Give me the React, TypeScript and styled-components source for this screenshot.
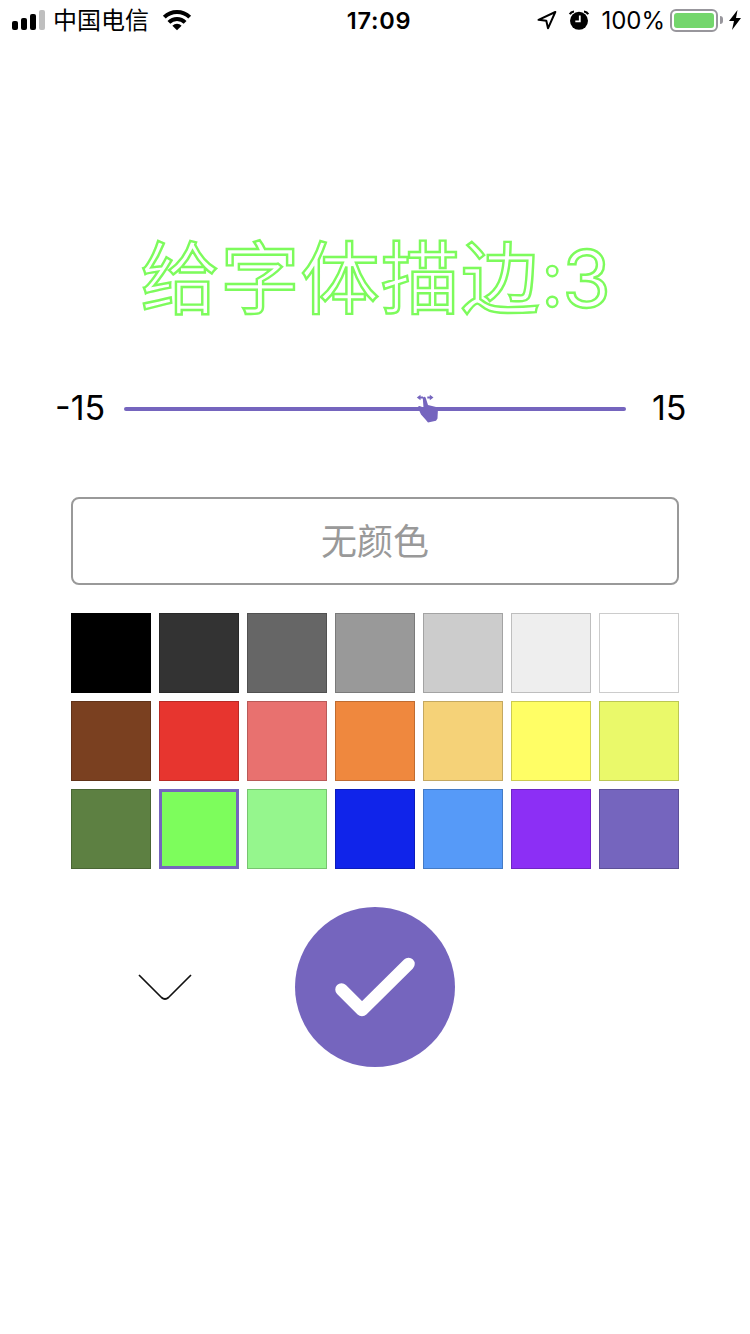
import React from 'react';
import styled, { createGlobalStyle } from 'styled-components';

const PURPLE = '#7565be';

const GlobalStyle = createGlobalStyle`
  *, *::before, *::after { box-sizing: border-box; }
  body {
    margin: 0;
    background: #fff;
    font-family: Inter, "Noto Sans CJK SC", sans-serif;
  }
`;

const Screen = styled.main`
  width: 750px;
  height: 1334px;
  overflow: hidden;
  display: flex;
  flex-direction: column;
  align-items: center;
  color: #000;
  background: #fff;
`;

const StatusBar = styled.header`
  width: 100%;
  height: 40px;
  padding: 0 9px 0 12px;
  display: grid;
  grid-template-columns: 1fr auto 1fr;
  align-items: center;
`;

const StatusGroup = styled.div<{ $end?: boolean }>`
  display: flex;
  align-items: center;
  justify-content: ${({ $end }) => ($end ? 'flex-end' : 'flex-start')};
`;

const Signal = styled.div`
  display: flex;
  align-items: flex-end;
  gap: 3px;
  height: 20px;
`;

const SignalBar = styled.i<{ $height: number; $weak?: boolean }>`
  width: 6px;
  height: ${({ $height }) => $height}px;
  border-radius: 2px;
  background: ${({ $weak }) => ($weak ? '#bfbfbf' : '#000')};
`;

const Carrier = styled.span`
  margin: 0 13px 0 8px;
  padding-top: 2px;
  font-size: 24px;
  line-height: 38px;
`;

const Clock = styled.time`
  padding: 2px 0 0 5px;
  font-size: 23.5px;
  font-weight: 600;
  letter-spacing: 0.8px;
  line-height: 38px;
`;

const Percent = styled.span`
  margin: 0 5px 0 11px;
  padding-top: 2px;
  font-size: 24px;
  line-height: 38px;
`;

const BatteryShell = styled.div`
  width: 48px;
  height: 23px;
  padding: 2px;
  border: 2px solid #98969c;
  border-radius: 6px;
`;

const BatteryFill = styled.div`
  height: 100%;
  border-radius: 3px;
  background: #74d66c;
`;

const BatteryTip = styled.div`
  width: 3px;
  height: 8px;
  margin: 0 6px 0 2px;
  border-radius: 0 3px 3px 0;
  background: #98969c;
`;

const Title = styled.h1`
  margin: 179px 0 0;
  height: 120px;
  font-size: 79px;
  font-weight: 400;
  font-feature-settings: "calt" 0;
  letter-spacing: 1.1px;
  line-height: 120px;
  white-space: nowrap;
  color: transparent;
  -webkit-text-stroke: 2.4px #7dfb5c;
`;

const TitleValue = styled.span`
  font-size: 78px;
  letter-spacing: -1px;
  line-height: 1;
  vertical-align: 1px;
`;

const SliderRow = styled.div`
  width: 100%;
  height: 60px;
  margin-top: 39px;
  padding: 0 55px;
  display: grid;
  grid-template-columns: 69px 502px 1fr;
  align-items: center;
`;

const Limit = styled.span<{ $max?: boolean }>`
  padding-left: ${({ $max }) => ($max ? 26 : 0)}px;
  font-size: 34px;
  line-height: 60px;
`;

const Track = styled.div`
  position: relative;
  width: 502px;
  height: 4px;
  margin: 2px 0 0;
  border-radius: 2px;
  background: ${PURPLE};
`;

const Thumb = styled.svg`
  position: absolute;
  left: 292px;
  top: -13px;
`;

const NoColor = styled.button`
  width: 608px;
  height: 88px;
  margin-top: 59px;
  padding: 0 0 4px;
  border: 2px solid #999;
  border-radius: 8px;
  background: #fff;
  color: #999;
  font: 400 36px/80px "Noto Sans CJK SC", sans-serif;
`;

const Palette = styled.div`
  margin-top: 28px;
  display: grid;
  grid-template-columns: repeat(7, 80px);
  gap: 8px;
`;

const Swatch = styled.button<{ $color: string; $selected?: boolean }>`
  height: 80px;
  padding: 0;
  border: ${({ $selected }) => ($selected ? `3px solid ${PURPLE}` : '1px solid rgba(0, 0, 0, 0.2)')};
  background: ${({ $color }) => $color};
`;

const Actions = styled.div`
  width: 608px;
  margin-top: 38px;
  display: grid;
  grid-template-columns: 1fr 160px 1fr;
  align-items: center;
`;

const CollapseButton = styled.button`
  justify-self: center;
  display: flex;
  margin-right: 36px;
  padding: 0;
  border: 0;
  background: none;
`;

const ConfirmButton = styled.button`
  width: 160px;
  height: 160px;
  padding: 0;
  border: 0;
  border-radius: 50%;
  background: ${PURPLE};
`;

const AlarmSvg = styled.svg`
  margin-left: 11px;
`;

const colors = [
  '#000000', '#333333', '#666666', '#999999', '#cccccc', '#eeeeee', '#ffffff',
  '#7a4020', '#e7352f', '#e8716f', '#ef883e', '#f5d278', '#fffe65', '#eaf96a',
  '#5d8042', '#7dfd5c', '#95f68d', '#1024ea', '#569af8', '#8c2ff5', '#7565be',
];
const selected = 15;

const WifiIcon = () => (
  <svg width="30" height="22" viewBox="0 0 30 22" fill="none" stroke="#000" strokeWidth="4">
    <path d="M2.300 8.200a18 18 0 0 1 25.400 0" />
    <path d="M6.900 13.300a11.500 11.500 0 0 1 16.200 0" />
    <path d="M15 21.300l-4.600-4.600a6.500 6.500 0 0 1 9.200 0z" fill="#000" stroke="none" />
  </svg>
);

const LocationIcon = () => (
  <svg width="20" height="20" viewBox="0 0 20 20" fill="none" stroke="#000" strokeWidth="2" strokeLinejoin="round">
    <path d="M18.300 2L1.500 9.800l7.800.9 1.700 7.600z" />
  </svg>
);

const AlarmIcon = () => (
  <AlarmSvg width="22" height="20" viewBox="0 0 22 20" fill="none">
    <circle cx="11" cy="10.800" r="9" fill="#000" />
    <path d="M1.800 4.200Q3 1.800 6 1.500M16 1.500Q19 1.800 20.200 4.200" stroke="#000" strokeWidth="2.200" />
    <path d="M11.800 5.500v5.800H7.300" stroke="#fff" strokeWidth="1.800" />
  </AlarmSvg>
);

const BoltIcon = () => (
  <svg width="12" height="20" viewBox="0 0 12 20">
    <path d="M8.500 0L0 11h5L3 20 12 8H7z" fill="#000" />
  </svg>
);

const HandThumb = () => (
  <Thumb width="24" height="30" viewBox="0 0 24 30" fill={PURPLE}>
    <path d="M.8 3.500L4.500.8v1.700H7v2H4.500v1.700zM17.500 3.500L13.800.8v1.700H11.300v2h2.500v1.700z" />
    <path d="M7.500 3q1.600-.8 2.200.8l2.300 7.200L20 13q2 .7 1.900 3l-.4 8.500-1.500 2.300-8 1.700-2.500-3-4.500-5L2.300 14.500Q1.300 12 3.500 12L7.500 13.500 6.800 4.500Q6.700 3.500 7.500 3z" />
  </Thumb>
);

export default function App() {
  return (
    <>
      <GlobalStyle />
      <Screen>
        <StatusBar>
          <StatusGroup>
            <Signal>
              <SignalBar $height={9} />
              <SignalBar $height={12} />
              <SignalBar $height={16} />
              <SignalBar $height={20} $weak />
            </Signal>
            <Carrier>中国电信</Carrier>
            <WifiIcon />
          </StatusGroup>
          <Clock>17:09</Clock>
          <StatusGroup $end>
            <LocationIcon />
            <AlarmIcon />
            <Percent>100%</Percent>
            <BatteryShell>
              <BatteryFill />
            </BatteryShell>
            <BatteryTip />
            <BoltIcon />
          </StatusGroup>
        </StatusBar>
        <Title>
          给字体描边<TitleValue>:3</TitleValue>
        </Title>
        <SliderRow>
          <Limit>-15</Limit>
          <Track>
            <HandThumb />
          </Track>
          <Limit $max>15</Limit>
        </SliderRow>
        <NoColor>无颜色</NoColor>
        <Palette>
          {colors.map((color, i) => (
            <Swatch key={color + i} $color={color} $selected={i === selected} />
          ))}
        </Palette>
        <Actions>
          <CollapseButton aria-label="收起">
            <svg width="56" height="30" viewBox="0 0 56 30" fill="none" stroke="#111" strokeWidth="1.700">
              <path d="M2 3l22.500 22.500q3.500 3 7 0L54 3" />
            </svg>
          </CollapseButton>
          <ConfirmButton aria-label="确定">
            <svg width="160" height="160" viewBox="0 0 160 160" fill="none" stroke="#fff" strokeWidth="12.500" strokeLinecap="round" strokeLinejoin="round">
              <path d="M46.500 82.500L67 103l46.500-46" />
            </svg>
          </ConfirmButton>
        </Actions>
      </Screen>
    </>
  );
}
